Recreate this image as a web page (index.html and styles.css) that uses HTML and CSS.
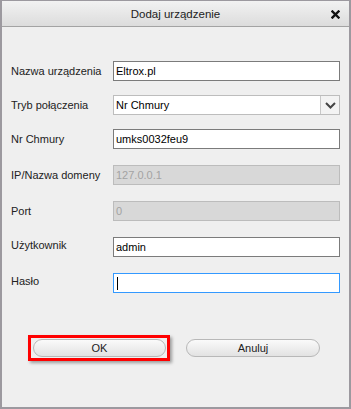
FILE: index.html
```html
<!DOCTYPE html>
<html lang="pl">
<head>
<meta charset="utf-8">
<link rel="stylesheet" href="styles.css">
</head>
<body>
<div class="dialog">
  <div class="titlebar">
    <span class="title">Dodaj urządzenie</span>
    <svg class="close" width="9" height="9" viewBox="0 0 9 9"><path d="M1.5 1.5 L7.5 7.5 M7.5 1.5 L1.5 7.5" stroke="#111" stroke-width="2.4" stroke-linecap="square"/></svg>
  </div>
  <div class="form">
    <div class="row r-a">
      <label class="lbl">Nazwa urządzenia</label>
      <div class="field">Eltrox.pl</div>
    </div>
    <div class="row r-a">
      <label class="lbl">Tryb połączenia</label>
      <div class="field select"><span class="sel-text">Nr Chmury</span><span class="arrow"><svg width="11" height="7" viewBox="0 0 11 7"><path d="M1 1 L5.5 5.5 L10 1" fill="none" stroke="#444" stroke-width="2"/></svg></span></div>
    </div>
    <div class="row">
      <label class="lbl">Nr Chmury</label>
      <div class="field">umks0032feu9</div>
    </div>
    <div class="row">
      <label class="lbl">IP/Nazwa domeny</label>
      <div class="field disabled">127.0.0.1</div>
    </div>
    <div class="row">
      <label class="lbl">Port</label>
      <div class="field disabled">0</div>
    </div>
    <div class="row up">
      <label class="lbl">Użytkownik</label>
      <div class="field">admin</div>
    </div>
    <div class="row up">
      <label class="lbl">Hasło</label>
      <div class="field focus"><span class="caret"></span></div>
    </div>
  </div>
  <div class="buttons">
    <div class="highlight"><button class="btn">OK</button></div>
    <button class="btn">Anuluj</button>
  </div>
</div>
</body>
</html>
```
FILE: styles.css
```css
html, body {
  margin: 0;
  padding: 0;
  background: #efefef;
}
body {
  font-family: "Liberation Sans", "DejaVu Sans", sans-serif;
  font-size: 11px;
  color: #1a1a1a;
}
.dialog {
  box-sizing: border-box;
  width: 351px;
  height: 409px;
  border: 2px solid #9c999f;
  border-top-width: 1px;
  background: #efefef;
}
.titlebar {
  position: relative;
  height: 25px;
  border-bottom: 1px solid #a3a3a3;
  background: linear-gradient(#f2f2f2, #dcdcdc);
  display: flex;
  align-items: center;
  justify-content: center;
}
.title {
  font-size: 11.5px;
  color: #222;
  margin-top: 1px;
}
.close {
  position: absolute;
  right: 9px;
  top: 9px;
}
.form {
  padding: 34px 0 0 9px;
}
.row {
  display: flex;
  align-items: center;
  height: 20px;
  margin-bottom: 16px;
}
.row.r-a {
  margin-bottom: 14px;
}
.lbl {
  width: 102px;
  color: #222;
}
.row.up .lbl {
  margin-top: -5px;
}
.field {
  box-sizing: border-box;
  width: 227px;
  height: 20px;
  border: 1px solid #7b7b7b;
  background: #fff;
  padding: 0 2px;
  display: flex;
  align-items: center;
  color: #000;
}
.field.select {
  border-color: #bdbdbd;
  padding-right: 0;
  justify-content: space-between;
}
.arrow {
  width: 18px;
  height: 18px;
  border-left: 1px solid #c8c8c8;
  background: #f3f3f3;
  display: flex;
  align-items: center;
  justify-content: center;
}
.field.disabled {
  background: #d8d8d8;
  border-color: #bcbcbc;
  color: #a3a3a3;
}
.field.focus {
  border-color: #3399ff;
}
.caret {
  width: 1px;
  height: 13px;
  background: #000;
  margin-left: 1px;
}
.buttons {
  display: flex;
  align-items: center;
  padding: 26px 0 0 26px;
}
.highlight {
  border: 3px solid #ff0000;
  padding: 1px 0 1px 2px;
  box-shadow: 2px 2px 3px rgba(0,0,0,0.35);
  width: 134px;
  display: flex;
}
.btn {
  box-sizing: border-box;
  width: 133px;
  height: 18px;
  border: 1px solid #b8b8b8;
  border-radius: 9px;
  background: linear-gradient(#fafafa, #e2e2e2);
  font-family: "Liberation Sans", "DejaVu Sans", sans-serif;
  font-size: 11px;
  color: #222;
  padding: 0;
  margin: 0;
}
.buttons > .btn {
  width: 134px;
  margin-left: 16px;
}
```
